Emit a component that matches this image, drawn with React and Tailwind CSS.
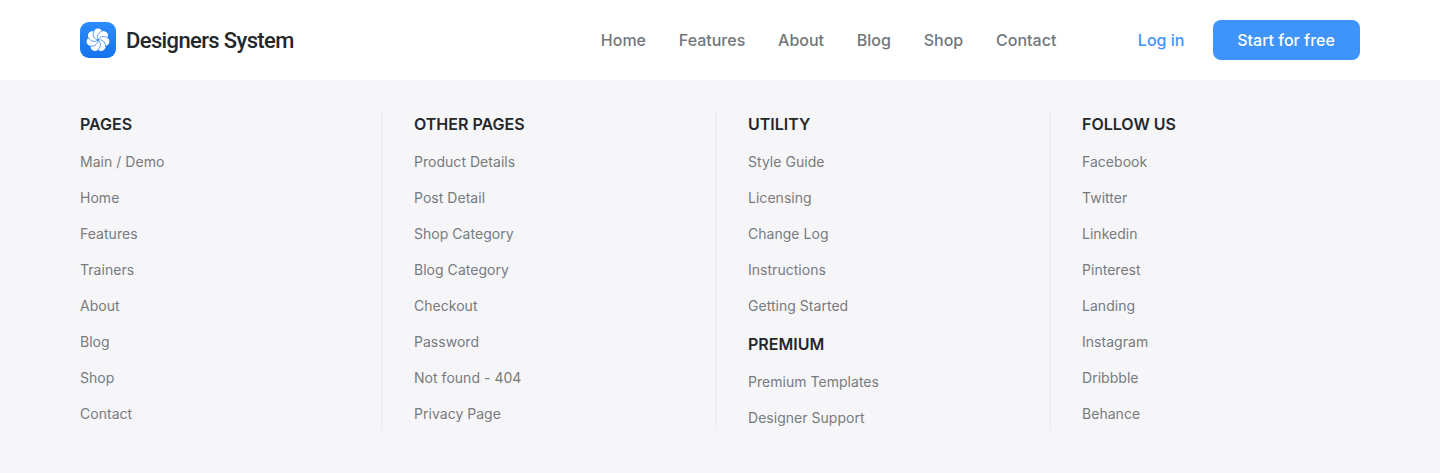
const NAV = ["Home", "Features", "About", "Blog", "Shop", "Contact"];

const COLUMNS = [
  [{ title: "PAGES", links: ["Main / Demo", "Home", "Features", "Trainers", "About", "Blog", "Shop", "Contact"] }],
  [
    {
      title: "OTHER PAGES",
      links: ["Product Details", "Post Detail", "Shop Category", "Blog Category", "Checkout", "Password", "Not found - 404", "Privacy Page"],
    },
  ],
  [
    { title: "UTILITY", links: ["Style Guide", "Licensing", "Change Log", "Instructions", "Getting Started"] },
    { title: "PREMIUM", links: ["Premium Templates", "Designer Support"] },
  ],
  [{ title: "FOLLOW US", links: ["Facebook", "Twitter", "Linkedin", "Pinterest", "Landing", "Instagram", "Dribbble", "Behance"] }],
];

const PETALS = Array.from({ length: 7 }, (_, i) => (i * 360) / 7);

function Logo() {
  return (
    <svg className="size-9" viewBox="0 0 36 36" fill="none">
      <defs>
        <linearGradient id="tile" x1="0" y1="0" x2="0" y2="36" gradientUnits="userSpaceOnUse">
          <stop stopColor="#2c8cfb" />
          <stop offset="1" stopColor="#1673ec" />
        </linearGradient>
      </defs>
      <rect width="36" height="36" rx="9" fill="url(#tile)" />
      <g>
        <circle cx="18" cy="18" r="7" fill="#fff" />
        {PETALS.map((a) => (
          <circle key={a} cx="18" cy="10.8" r="4.4" fill="#fff" transform={`rotate(${a} 18 18)`} />
        ))}
        {PETALS.map((a) => (
          <path key={a} d="M18 18C16.4 14.8 17.6 10.8 22.4 9" stroke="#2580f4" strokeWidth="0.7" transform={`rotate(${a} 18 18)`} />
        ))}
      </g>
    </svg>
  );
}

function LinkGroup({ title, links }) {
  return (
    <section>
      <h2 className="text-base leading-6 font-semibold text-[#25282b]">{title}</h2>
      <ul className="mt-4 flex flex-col gap-4">
        {links.map((link) => (
          <li key={link} className="text-sm leading-5 tracking-[0.03px] text-[#767b7e]">
            <a href="#">{link}</a>
          </li>
        ))}
      </ul>
    </section>
  );
}

export default function App() {
  return (
    <div className="flex h-[473px] w-[1440px] flex-col bg-[#f6f6f9] font-['Inter',sans-serif]">
      <header className="flex h-20 items-center bg-white px-20">
        <a href="#" className="flex items-center gap-2.5">
          <Logo />
          <span className="pt-0.5 font-['Roboto',sans-serif] text-[22px] leading-8 font-medium tracking-[-0.63px] text-[#25282b]">Designers System</span>
        </a>
        <nav className="ml-auto flex gap-[32.8px] text-base leading-6 font-medium text-[#72777a]">
          {NAV.map((item) => (
            <a key={item} href="#">{item}</a>
          ))}
        </nav>
        <a href="#" className="ml-[81.5px] text-base leading-6 font-medium text-[#3e94f8]">Log in</a>
        <button className="ml-[28.6px] h-10 w-[147px] rounded-lg bg-[#3e94f8] pr-px text-base leading-6 font-medium text-white">Start for free</button>
      </header>
      <main className="flex gap-[31px] px-20 pt-8">
        {COLUMNS.map((groups, i) => (
          <div
            key={groups[0].title}
            className={`flex h-[318px] flex-col gap-4 ${i < COLUMNS.length - 1 ? "w-[303px] border-r-2 border-[#eff0f2]" : "flex-1"}`}
          >
            {groups.map((group) => (
              <LinkGroup key={group.title} {...group} />
            ))}
          </div>
        ))}
      </main>
    </div>
  );
}
